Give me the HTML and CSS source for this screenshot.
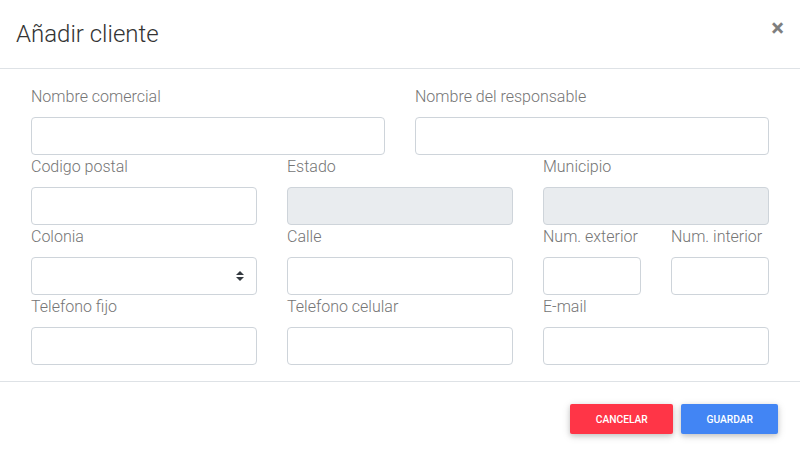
FILE: index.html
```html
<!DOCTYPE html>
<html lang="es">
<head>
<meta charset="utf-8">
<title>Añadir cliente</title>
<link rel="stylesheet" href="styles.css">
</head>
<body>
<div class="modal">
  <div class="modal-header">
    <h4 class="modal-title">Añadir cliente</h4>
    <button class="close" type="button" aria-label="Close">&times;</button>
  </div>
  <div class="modal-body">
    <div class="row">
      <div class="col col-6"><label>Nombre comercial</label><input class="form-control" type="text"></div>
      <div class="col col-6"><label>Nombre del responsable</label><input class="form-control" type="text"></div>
    </div>
    <div class="row">
      <div class="col col-4"><label>Codigo postal</label><input class="form-control" type="text"></div>
      <div class="col col-4"><label>Estado</label><input class="form-control" type="text" disabled></div>
      <div class="col col-4"><label>Municipio</label><input class="form-control" type="text" disabled></div>
    </div>
    <div class="row">
      <div class="col col-4"><label>Colonia</label><div class="form-control select"><svg class="arrows" width="8" height="10" viewBox="0 0 4 5"><path d="M2 0L0 2h4zm0 5L0 3h4z" fill="#343a40"/></svg></div></div>
      <div class="col col-4"><label>Calle</label><input class="form-control" type="text"></div>
      <div class="col col-2"><label>Num. exterior</label><input class="form-control" type="text"></div>
      <div class="col col-2"><label>Num. interior</label><input class="form-control" type="text"></div>
    </div>
    <div class="row">
      <div class="col col-4"><label>Telefono fijo</label><input class="form-control" type="text"></div>
      <div class="col col-4"><label>Telefono celular</label><input class="form-control" type="text"></div>
      <div class="col col-4"><label>E-mail</label><input class="form-control" type="text"></div>
    </div>
  </div>
  <div class="modal-footer">
    <button class="btn btn-danger" type="button">Cancelar</button>
    <button class="btn btn-primary" type="button">Guardar</button>
  </div>
</div>
</body>
</html>
```
FILE: styles.css
```css
* { box-sizing: border-box; }
html, body { margin: 0; padding: 0; background: #fff; }
body {
  font-family: Roboto, "Liberation Sans", sans-serif;
  font-weight: 300;
  font-size: 16px;
  line-height: 1.5;
  color: #212529;
}
.modal { width: 800px; height: 457px; background: #fff; overflow: hidden; }
.modal-header {
  display: flex;
  align-items: flex-start;
  justify-content: space-between;
  padding: 16px;
  border-bottom: 1px solid #dee2e6;
}
.modal-title {
  margin: 0;
  font-size: 24px;
  font-weight: 300;
  line-height: 36px;
  color: #333;
}
.close {
  padding: 16px;
  margin: -16px -16px -16px auto;
  background: transparent;
  border: 0;
  font-family: Roboto, "Liberation Sans", sans-serif;
  font-size: 24px;
  font-weight: 700;
  line-height: 1;
  color: #000;
  opacity: .5;
  cursor: pointer;
}
.modal-body { padding: 16px; }
.row { display: flex; }
.col { padding: 0 15px; display: flex; flex-direction: column; }
.col-6 { width: 50%; }
.col-4 { width: 33.3333%; }
.col-2 { width: 16.6667%; }
label {
  display: block;
  margin-bottom: 8px;
  color: #757575;
  font-size: 16px;
  line-height: 24px;
  white-space: nowrap;
}
.form-control {
  display: block;
  width: 100%;
  height: 38px;
  padding: 6px 12px;
  font: inherit;
  border: 1px solid #ced4da;
  border-radius: 4px;
  background: #fff;
  color: #495057;
  outline: none;
}
.form-control:disabled { background: #e9ecef; }
.select { position: relative; }
.arrows { position: absolute; right: 12px; top: 13px; }
.modal-footer {
  display: flex;
  justify-content: flex-end;
  align-items: center;
  gap: 8px;
  padding: 22px 22px 0;
  border-top: 1px solid #dee2e6;
}
.btn {
  height: 30px;
  padding: 0 25.6px;
  border: 0;
  border-radius: 2px;
  font-family: Roboto, "Liberation Sans", sans-serif;
  font-size: 10.24px;
  font-weight: 500;
  text-transform: uppercase;
  color: #fff;
  box-shadow: 0 2px 5px 0 rgba(0,0,0,.16), 0 2px 10px 0 rgba(0,0,0,.12);
  cursor: pointer;
}
.btn-primary { padding: 0 25px; }
.btn-danger { background: #ff3547; }
.btn-primary { background: #4285f4; }
```
